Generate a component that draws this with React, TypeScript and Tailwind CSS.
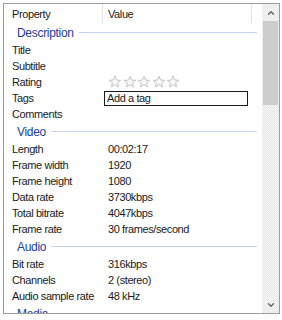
import { ChevronUp, ChevronDown } from 'lucide-react';

type Row = { label: string; value?: string; kind?: 'stars' | 'tags' };
type Group = { title: string; rows: Row[] };

const groups: Group[] = [
  {
    title: 'Description',
    rows: [
      { label: 'Title' },
      { label: 'Subtitle' },
      { label: 'Rating', kind: 'stars' },
      { label: 'Tags', kind: 'tags' },
      { label: 'Comments' },
    ],
  },
  {
    title: 'Video',
    rows: [
      { label: 'Length', value: '00:02:17' },
      { label: 'Frame width', value: '1920' },
      { label: 'Frame height', value: '1080' },
      { label: 'Data rate', value: '3730kbps' },
      { label: 'Total bitrate', value: '4047kbps' },
      { label: 'Frame rate', value: '30 frames/second' },
    ],
  },
  {
    title: 'Audio',
    rows: [
      { label: 'Bit rate', value: '316kbps' },
      { label: 'Channels', value: '2 (stereo)' },
      { label: 'Audio sample rate', value: '48 kHz' },
    ],
  },
  { title: 'Media', rows: [] },
];

function Star() {
  return (
    <svg width="14" height="14" viewBox="0 0 14 14">
      <path
        d="M7 1.2 8.6 5.1 12.7 5.3 9.5 7.9 10.6 11.9 7 9.6 3.4 11.9 4.5 7.9 1.3 5.3 5.4 5.1Z"
        fill="#fafafa"
        stroke="#c4c4c4"
        strokeWidth="1"
        strokeLinejoin="round"
      />
    </svg>
  );
}

function PropRow({ row }: { row: Row }) {
  return (
    <div className="flex h-[16px] items-center">
      <div className="w-[100px] shrink-0 pl-[8px] whitespace-nowrap">{row.label}</div>
      <div className="flex-1 min-w-0">
        {row.kind === 'stars' && (
          <div className="flex gap-[0.5px] pl-[4px]">
            {[0, 1, 2, 3, 4].map((i) => (
              <Star key={i} />
            ))}
          </div>
        )}
        {row.kind === 'tags' && (
          <div className="mr-[14px] h-[15px] border border-[#1a1a1a] pl-[2px] leading-[13px]">Add a tag</div>
        )}
        {row.value && <span className="pl-[4px] whitespace-nowrap">{row.value}</span>}
      </div>
    </div>
  );
}

export default function App() {
  return (
    <div className="w-[282px] h-[320px] bg-white pt-[3px] pl-[3px] text-[11px] leading-[14px] tracking-[-0.4px] text-[#1a1a1a] [font-family:'Liberation_Sans',Arial,sans-serif]">
      <div className="flex w-[277px] h-[311px] border border-[#9c9c9c] overflow-hidden">
        {/* Property list */}
        <div className="flex-1 min-w-0 overflow-hidden">
          {/* Column header */}
          <div className="flex h-[19px] items-center">
            <div className="w-[98px] pl-[8px]">Property</div>
            <div className="h-[19px] w-px bg-[#e3e3e3]" />
            <div className="flex-1 pl-[5px]">Value</div>
            <div className="h-[19px] w-px bg-[#e3e3e3] mr-[10px]" />
          </div>

          {groups.map((g) => (
            <div key={g.title}>
              <div className="flex h-[19px] items-center pl-[13px] pr-[5px]">
                <span className="text-[12px] tracking-[-0.3px] text-[#1e3e9a]">{g.title}</span>
                <div className="ml-[5px] flex-1 h-px bg-[#c7d6ee]" />
              </div>
              {g.rows.map((r) => (
                <PropRow key={r.label} row={r} />
              ))}
            </div>
          ))}
        </div>

        {/* Scrollbar */}
        <div className="flex w-[17px] shrink-0 flex-col bg-[repeating-conic-gradient(#e6e6e6_0_25%,#f7f7f7_0_50%)] bg-[length:2px_2px]">
          <div className="flex h-[17px] items-center justify-center text-[#606060]">
            <ChevronUp size={10} strokeWidth={3} />
          </div>
          <div className="mx-[1px] h-[84px] bg-[#cdcdcd]" />
          <div className="flex-1" />
          <div className="flex h-[17px] items-center justify-center text-[#606060]">
            <ChevronDown size={10} strokeWidth={3} />
          </div>
        </div>
      </div>
    </div>
  );
}
